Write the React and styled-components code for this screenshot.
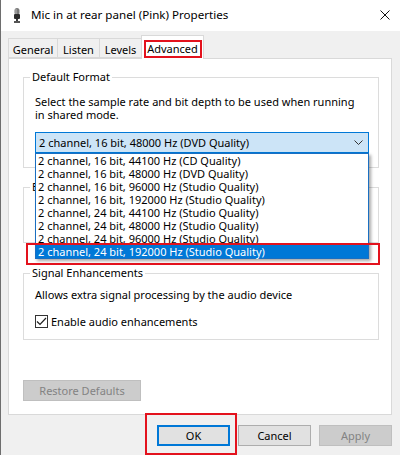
import React from 'react'
import styled, { createGlobalStyle } from 'styled-components'

const GlobalStyle = createGlobalStyle`
  html, body {
    margin: 0;
    padding: 0;
    background: #f0f0f0;
  }
  * {
    box-sizing: border-box;
  }
`

const Window = styled.div`
  width: 400px;
  height: 455px;
  display: flex;
  flex-direction: column;
  background: #f0f0f0;
  border-left: 1px solid #6e6e6e;
  overflow: hidden;
  font-family: "Noto Sans", "Liberation Sans", sans-serif;
  font-size: 11px;
  color: #000;
`

const TitleBar = styled.div`
  height: 31px;
  flex: none;
  display: flex;
  align-items: center;
  padding: 0 10px 0 12px;
  background: #ffffff;
`

const Title = styled.div`
  margin-left: 10px;
  font-size: 11.6px;
  line-height: 16px;
  padding-bottom: 1px;
`

const CloseButton = styled.div`
  margin-left: auto;
  width: 10px;
  height: 10px;
  display: flex;
  margin-bottom: 1px;
`

const Body = styled.div`
  padding: 0 8px 0 7px;
  display: flex;
  flex-direction: column;
`

const TabRow = styled.div`
  display: flex;
  align-items: flex-end;
  margin-top: 4px;
`

const Tab = styled.div`
  position: relative;
  width: ${p => p.$w}px;
  height: ${p => (p.$active ? 24 : 20)}px;
  margin-bottom: ${p => (p.$active ? -1 : 0)}px;
  margin-left: -1px;
  display: flex;
  align-items: center;
  justify-content: center;
  padding-top: ${p => (p.$active ? 1 : 3)}px;
  background: ${p => (p.$active ? '#ffffff' : '#f0f0f0')};
  border: 1px solid #d9d9d9;
  border-bottom: ${p => (p.$active ? 'none' : '1px solid #d9d9d9')};
  z-index: ${p => (p.$active ? 2 : 1)};
  line-height: 13px;
  &:first-child {
    margin-left: 0;
  }
`

const Highlight = styled.div`
  position: absolute;
  top: ${p => p.$t}px;
  left: ${p => p.$l}px;
  right: ${p => p.$r}px;
  bottom: ${p => p.$b}px;
  border: 2px solid #e3121d;
  pointer-events: none;
  z-index: 10;
`

const Panel = styled.div`
  background: #ffffff;
  border: 1px solid #d9d9d9;
  padding: 11px 12px 13px 14px;
  display: flex;
  flex-direction: column;
  align-items: flex-start;
`

const Group = styled.fieldset`
  margin: ${p => p.$mt || 0}px 0 0 0;
  padding: 0;
  min-width: 0;
  width: 356px;
  border: 1px solid #dcdcdc;
  position: relative;
`

const Legend = styled.legend`
  margin-left: 6px;
  padding: 0 2px;
  line-height: 14px;
  font-size: 11px;
`

const GroupBody = styled.div`
  padding: ${p => p.$pad};
  min-height: ${p => p.$h || 0}px;
  display: flex;
  flex-direction: column;
`

const Text = styled.div`
  line-height: 13px;
`

const ComboWrap = styled.div`
  position: relative;
  margin-top: 11px;
  z-index: 5;
`

const Combo = styled.div`
  height: 21px;
  display: flex;
  align-items: center;
  padding: 0 5px 0 3px;
  background: #cce4f7;
  border: 1px solid #0078d7;
  line-height: 13px;
`

const ComboText = styled.span`
  flex: 1;
`

const DropList = styled.div`
  position: absolute;
  top: 100%;
  left: 0;
  right: 0;
  background: #ffffff;
  border: 1px solid #1a6fc2;
  box-shadow: 2px 2px 3px rgba(0, 0, 0, 0.35);
`

const Item = styled.div`
  position: relative;
  height: 13px;
  line-height: 13px;
  padding-left: 2px;
  white-space: nowrap;
  background: ${p => (p.$selected ? '#0078d7' : 'transparent')};
  color: ${p => (p.$selected ? '#ffffff' : '#000000')};
`

const CheckRow = styled.label`
  display: flex;
  align-items: center;
  height: 15px;
  margin-top: ${p => p.$mt || 0}px;
  line-height: 13px;
`

const Box = styled.span`
  width: 13px;
  height: 13px;
  flex: none;
  margin-right: 3px;
  border: 1px solid #333333;
  background: #ffffff;
  display: flex;
  align-items: center;
  justify-content: center;
`

const Button = styled.div`
  position: relative;
  width: ${p => p.$w || 73}px;
  height: 21px;
  display: flex;
  align-items: center;
  justify-content: center;
  line-height: 13px;
  background: ${p => (p.$disabled ? '#cccccc' : '#e1e1e1')};
  color: ${p => (p.$disabled ? '#838383' : '#000000')};
  border: ${p =>
    p.$default ? '2px solid #0078d7' : p.$disabled ? '1px solid #bfbfbf' : '1px solid #adadad'};
  margin-top: ${p => p.$mt || 0}px;
`

const ButtonRow = styled.div`
  display: flex;
  justify-content: flex-end;
  gap: 8px;
  padding-top: 10px;
`

const MicIcon = () => (
  <svg width="8" height="15" viewBox="0 0 8 15">
    <rect x="1.5" y="0" width="5" height="7" rx="2.5" fill="#7a7a7a" />
    <rect x="2.5" y="1" width="1" height="5" fill="#b5b5b5" />
    <rect x="1" y="6" width="6" height="5" rx="1" fill="#2b2b2b" />
    <rect x="3" y="11" width="2" height="2" fill="#3a3a3a" />
    <rect x="1" y="13" width="6" height="2" fill="#555555" />
  </svg>
)

const formats = [
  '2 channel, 16 bit, 44100 Hz (CD Quality)',
  '2 channel, 16 bit, 48000 Hz (DVD Quality)',
  '2 channel, 16 bit, 96000 Hz (Studio Quality)',
  '2 channel, 16 bit, 192000 Hz (Studio Quality)',
  '2 channel, 24 bit, 44100 Hz (Studio Quality)',
  '2 channel, 24 bit, 48000 Hz (Studio Quality)',
  '2 channel, 24 bit, 96000 Hz (Studio Quality)',
  '2 channel, 24 bit, 192000 Hz (Studio Quality)',
]

const tabs = [
  { label: 'General', w: 50 },
  { label: 'Listen', w: 43 },
  { label: 'Levels', w: 43 },
  { label: 'Advanced', w: 63, active: true },
]

const Check = () => (
  <svg width="11" height="9" viewBox="0 0 11 9">
    <path d="M1 4.5 L4 7.5 L10 1" fill="none" stroke="#1f1f1f" strokeWidth="1.2" />
  </svg>
)

export default function App() {
  return (
    <>
      <GlobalStyle />
      <Window>
        <TitleBar>
          <MicIcon />
          <Title>Mic in at rear panel (Pink) Properties</Title>
          <CloseButton>
            <svg width="10" height="10" viewBox="0 0 10 10">
              <path d="M0.5 0.5 L9.5 9.5 M9.5 0.5 L0.5 9.5" stroke="#111" strokeWidth="1" />
            </svg>
          </CloseButton>
        </TitleBar>

        <Body>
          <TabRow>
            {tabs.map(t => (
              <Tab key={t.label} $w={t.w} $active={t.active}>
                {t.label}
                {t.active && <Highlight $t={4} $l={2} $r={1} $b={1} />}
              </Tab>
            ))}
          </TabRow>

          <Panel>
            <Group>
              <Legend>Default Format</Legend>
              <GroupBody $pad="11px 9px 14px 11px">
                <Text>
                  Select the sample rate and bit depth to be used when running
                  <br />
                  in shared mode.
                </Text>
                <ComboWrap>
                  <Combo>
                    <ComboText>2 channel, 16 bit, 48000 Hz (DVD Quality)</ComboText>
                    <svg width="9" height="5" viewBox="0 0 9 5">
                      <path d="M0.5 0.5 L4.5 4.5 L8.5 0.5" fill="none" stroke="#333" strokeWidth="1" />
                    </svg>
                  </Combo>
                  <DropList>
                    {formats.map((f, i) => (
                      <Item key={f} $selected={i === formats.length - 1}>
                        {f}
                        {i === formats.length - 1 && <Highlight $t={-2} $l={-10} $r={-12} $b={-7} />}
                      </Item>
                    ))}
                  </DropList>
                </ComboWrap>
              </GroupBody>
            </Group>

            {/* Exclusive Mode group sits behind the open list; only its frame edge shows */}
            <Group $mt={12}>
              <Legend>E</Legend>
              <GroupBody $h={48} />
            </Group>

            <Group $mt={23}>
              <Legend>Signal Enhancements</Legend>
              <GroupBody $pad="8px 9px 10px 11px">
                <Text>Allows extra signal processing by the audio device</Text>
                <CheckRow $mt={13}>
                  <Box><Check /></Box>
                  Enable audio enhancements
                </CheckRow>
              </GroupBody>
            </Group>

            <Button $w={118} $disabled $mt={40}>Restore Defaults</Button>
          </Panel>

          <ButtonRow>
            <Button $default>
              OK
              <Highlight $t={-14} $l={-14} $r={-9} $b={-11} />
            </Button>
            <Button>Cancel</Button>
            <Button $disabled>Apply</Button>
          </ButtonRow>
        </Body>
      </Window>
    </>
  )
}
